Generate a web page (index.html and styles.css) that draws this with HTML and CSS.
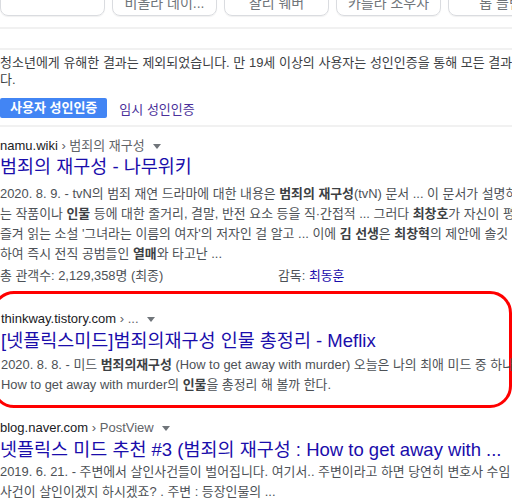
FILE: index.html
```html
<!DOCTYPE html>
<html lang="ko">
<head>
<meta charset="utf-8">
<link rel="stylesheet" href="styles.css">
</head>
<body>
<div class="page">
  <div class="chips">
    <div class="chip"></div>
    <div class="chip"><span>비올라 데이...</span></div>
    <div class="chip"><span>찰리 웨버</span></div>
    <div class="chip"><span>카를라 소우자</span></div>
    <div class="chip"><span>롭 플린</span></div>
  </div>
  <div class="rule rule-a"></div>
  <div class="rule rule-b"></div>
  <div class="notice">
    <div class="line">청소년에게 유해한 결과는 제외되었습니다. 만 19세 이상의 사용자는 성인인증을 통해 모든 결과를 볼 수 있습니</div>
    <div class="line">다.</div>
  </div>
  <div class="auth">
    <span class="btn">사용자 성인인증</span>
    <span class="temp">임시 성인인증</span>
  </div>
  <div class="rule rule-c"></div>

  <div class="result r1">
    <div class="url"><span class="host">namu.wiki</span><span class="path">&nbsp;› 범죄의 재구성</span><span class="caret"></span></div>
    <div class="title">범죄의 재구성 - 나무위키</div>
    <div class="snip">
      <div class="line">2020. 8. 9. - tvN의 범죄 재연 드라마에 대한 내용은 <b>범죄의 재구성</b>(tvN) 문서 ... 이 문서가 설명하고 있는</div>
      <div class="line">는 작품이나 <b>인물</b> 등에 대한 줄거리, 결말, 반전 요소 등을 직·간접적 ... 그러다 <b>최창호</b>가 자신이 평소</div>
      <div class="line">즐겨 읽는 소설 '그녀라는 이름의 여자'의 저자인 걸 알고 ... 이에 <b>김 선생</b>은 <b>최창혁</b>의 제안에 솔깃</div>
      <div class="line">하여 즉시 전직 공범들인 <b>열매</b>와 타고난 ...</div>
    </div>
    <div class="facts">
      <span class="fact">총 관객수: 2,129,358명 (최종)</span>
      <span class="fact">감독: <span class="flink">최동훈</span></span>
    </div>
  </div>

  <div class="result r2 marked">
    <div class="url"><span class="host">thinkway.tistory.com</span><span class="path">&nbsp;› ...</span><span class="caret"></span></div>
    <div class="title">[넷플릭스미드]범죄의재구성 인물 총정리 - Meflix</div>
    <div class="snip">
      <div class="line">2020. 8. 8. - 미드 <b>범죄의재구성</b> (How to get away with murder) 오늘은 나의 최애 미드 중 하나. 그리고</div>
      <div class="line">How to get away with murder의 <b>인물</b>을 총정리 해 볼까 한다.</div>
    </div>
  </div>

  <div class="result r3">
    <div class="url"><span class="host">blog.naver.com</span><span class="path">&nbsp;› PostView</span><span class="caret"></span></div>
    <div class="title">넷플릭스 미드 추천 #3 (범죄의 재구성 : How to get away with ...</div>
    <div class="snip">
      <div class="line">2019. 6. 21. - 주변에서 살인사건들이 벌어집니다. 여기서.. 주변이라고 하면 당연히 변호사 수임</div>
      <div class="line">사건이 살인이겠지 하시겠죠? . 주변 : 등장인물의 ...</div>
    </div>
  </div>
</div>
</body>
</html>
```
FILE: styles.css
```css
html, body {
  margin: 0;
  padding: 0;
  background: #ffffff;
}
body {
  width: 523px;
  height: 503px;
  overflow: hidden;
  font-family: "Liberation Sans", Arial, "Noto Sans CJK KR", sans-serif;
  color: #4d5156;
}
.page {
  width: 512px;
  overflow: hidden;
}
.chips {
  display: flex;
  gap: 7px;
  margin-top: -18px;
  height: 34px;
}
.chip {
  flex: 0 0 105px;
  box-sizing: border-box;
  height: 34px;
  border: 1px solid #dadce0;
  border-radius: 8px;
  box-shadow: 0 1px 1px rgba(0,0,0,0.06);
  display: flex;
  align-items: center;
  justify-content: center;
  font-size: 14px;
  color: #70757a;
  white-space: nowrap;
  overflow: hidden;
}
.chip span { padding-top: 5px; }
.rule {
  height: 2px;
  background: #f1f1f1;
}
.rule-a { margin-top: 11px; }
.rule-b { margin-top: 19px; }
.notice {
  margin-top: 4px;
  font-size: 13px;
  line-height: 17px;
  color: #3c4043;
}
.line {
  white-space: nowrap;
}
.auth {
  margin-top: 10px;
  display: flex;
  align-items: center;
  gap: 12px;
  height: 20px;
}
.btn {
  background: #4285f4;
  color: #ffffff;
  font-weight: bold;
  font-size: 13px;
  line-height: 20px;
  height: 20px;
  padding: 0 10px;
  border-radius: 2px;
}
.temp {
  color: #4a2f9a;
  font-size: 13px;
}
.rule-c { margin-top: 7px; }
.result {
  white-space: nowrap;
}
.r1 { margin-top: 10px; }
.url {
  font-size: 13px;
  line-height: 18px;
  color: #202124;
  display: flex;
  align-items: center;
}
.path { color: #5f6368; }
.caret {
  margin-left: 8px;
  width: 0;
  height: 0;
  border-left: 4px solid transparent;
  border-right: 4px solid transparent;
  border-top: 5px solid #70757a;
}
.title {
  font-size: 18.5px;
  line-height: 24px;
  color: #1a0dab;
}
.snip {
  margin-top: 5px;
  font-size: 12.9px;
  line-height: 20px;
  color: #4d5156;
}
.snip b {
  color: #3c4043;
}
.facts {
  display: flex;
  margin-top: 2px;
  font-size: 12.9px;
  line-height: 20px;
  color: #4d5156;
}
.fact:first-child { width: 278px; }
.flink { color: #1a0dab; }
.marked {
  margin-top: 5px;
  margin-left: -8px;
  padding: 16px 0 10px 6px;
  border: 3px solid #ff0000;
  border-radius: 22px;
  width: 520px;
  box-sizing: border-box;
}
.marked .title { margin-top: 1px; }
.marked .snip { margin-top: 2px; }
.r3 { margin-top: 11px; }
.r3 .title { margin-top: 1px; }
.r3 .snip { margin-top: 0; }
```
